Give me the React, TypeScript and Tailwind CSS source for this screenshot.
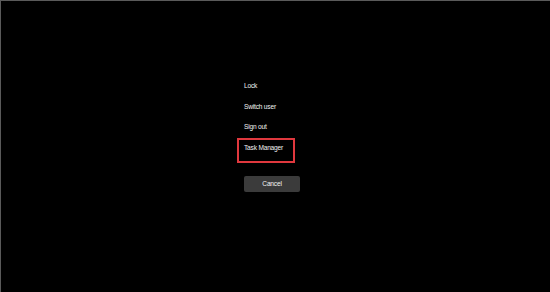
export default function App() {
  const items = ["Lock", "Switch user", "Sign out", "Task Manager"];

  return (
    <div
      className="h-[292px] w-[550px] overflow-hidden border-l border-t border-[#5a5a5a] bg-black text-white"
      style={{ fontFamily: '"Liberation Sans", Arial, sans-serif' }}
    >
      <div className="flex flex-col items-start pl-[243px] pt-[74.5px]">
        {items.map((item) => (
          <div
            key={item}
            className="relative flex h-[20.7px] items-center text-[6.6px] tracking-[-0.2px] text-[#f2f2f2]"
          >
            {item}
            {item === "Task Manager" && (
              <div className="absolute left-[-7px] top-[0.5px] h-[25px] w-[58px] border-2 border-[#e0383e]" />
            )}
          </div>
        ))}
        <button className="mt-[18px] flex h-[16px] w-[56px] items-center justify-center rounded-[2px] bg-[#3b3b3b] text-[6.6px] tracking-[-0.2px] text-[#f2f2f2]">
          Cancel
        </button>
      </div>
    </div>
  );
}
